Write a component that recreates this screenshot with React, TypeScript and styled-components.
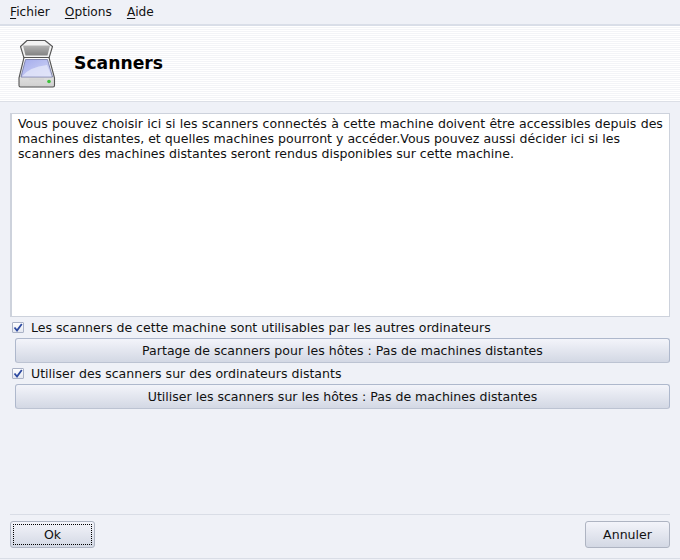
import React from "react";
import styled, { createGlobalStyle } from "styled-components";

const Global = createGlobalStyle`
  html, body { margin: 0; padding: 0; }
  body { font-family: "DejaVu Sans", sans-serif; font-size: 12px; color: #000; background: #eff1f7; }
`;

const Window = styled.div`
  width: 680px;
  height: 560px;
  display: flex;
  flex-direction: column;
  overflow: hidden;
  background: #eff1f7;
`;

const MenuBar = styled.div`
  height: 24px;
  display: flex;
  align-items: center;
  gap: 15px;
  padding-left: 10px;
  border-bottom: 2px solid #d9dee8;
`;

const MenuItem = styled.span`
  font-size: 12.2px;
  color: #111;
  u { text-underline-offset: 2px; }
`;

const Banner = styled.div`
  height: 75px;
  display: flex;
  align-items: center;
  gap: 17px;
  padding-left: 17px;
  border-bottom: 1px solid #dcdfe6;
  background: repeating-linear-gradient(to bottom, #ffffff 0, #ffffff 1px, #f3f4f7 1px, #f3f4f7 2px);
`;

const Title = styled.h1`
  margin: -2px 0 0;
  font-size: 17.2px;
  font-weight: bold;
  color: #000;
`;

const Content = styled.div`
  flex: 1;
  display: flex;
  flex-direction: column;
  padding: 11px 10px 0 10px;
`;

const Description = styled.div`
  height: 204px;
  box-sizing: border-box;
  padding: 2px 4px 2px 6px;
  background: #fff;
  border: 1px solid #cdd2dc;
  border-left-width: 2px;
  font-size: 12.55px;
  line-height: 15px;
  color: #111;
  &::first-line { word-spacing: 0.33px; }
`;

const CheckRow = styled.label`
  height: 21px;
  display: flex;
  align-items: center;
  gap: 7px;
  padding-left: 2px;
  font-size: 12.55px;
  color: #111;
`;

const CheckBox = styled.span`
  width: 10px;
  height: 9px;
  border: 1px solid #aab2c6;
  border-radius: 1px;
  background: linear-gradient(#ffffff, #e4e7f0);
  display: flex;
  align-items: center;
  justify-content: center;
  flex: none;
`;

const WideButton = styled.div`
  margin-left: 5px;
  height: 25px;
  box-sizing: border-box;
  display: flex;
  align-items: center;
  justify-content: center;
  border: 1px solid #aeb8cc;
  border-bottom-color: #bcc3d2;
  border-radius: 3px;
  background: linear-gradient(#f3f4fa, #d3d8e4);
  font-size: 12.55px;
  color: #111;
`;

const Group = styled.div`
  display: flex;
  flex-direction: column;
`;

const Spacer = styled.div`
  flex: 1;
`;

const Footer = styled.div`
  border-top: 1px solid #d9dde6;
  height: 44px;
  box-sizing: border-box;
  padding-top: 6px;
  display: flex;
  justify-content: space-between;
  align-items: flex-start;
`;

const DialogButton = styled.div<{ $focus?: boolean }>`
  width: 85px;
  height: 27px;
  box-sizing: border-box;
  position: relative;
  display: flex;
  align-items: center;
  justify-content: center;
  border: 1px solid #aeb4c2;
  border-radius: 3px;
  background: linear-gradient(#f3f4fa, #d3d8e4);
  font-size: 12.55px;
  color: #111;
  ${(p) =>
    p.$focus &&
    `&::after {
      content: "";
      position: absolute;
      inset: 2px;
      border: 1px dotted #000;
    }`}
`;

const BottomLine = styled.div`
  height: 1px;
  background: #d9dde6;
  margin: 0 -10px 1px;
`;

function ScannerIcon() {
  return (
    <svg width="40" height="50" viewBox="0 0 40 50">
      <defs>
        <linearGradient id="lid" x1="0" y1="0" x2="0" y2="1">
          <stop offset="0" stopColor="#b4b4b4" />
          <stop offset="1" stopColor="#828282" />
        </linearGradient>
        <linearGradient id="body" x1="0" y1="0" x2="0" y2="1">
          <stop offset="0" stopColor="#ffffff" />
          <stop offset="1" stopColor="#cfcfcf" />
        </linearGradient>
        <linearGradient id="glass" x1="0" y1="0" x2="1" y2="1">
          <stop offset="0" stopColor="#a3abec" />
          <stop offset="1" stopColor="#d5d9f6" />
        </linearGradient>
      </defs>
      <path d="M10 1.5 H28 L35.5 7.5 L32 19 H7 L3.5 7.5 Z" fill="#f2f2f2" stroke="#555" strokeWidth="1.1" strokeLinejoin="round" />
      <path d="M6 6.5 H33 L30.5 16.5 H8.5 Z" fill="url(#lid)" />
      <path d="M7 18.5 H32 L37.5 39 V46.5 Q37.5 48 36 48 H3.5 Q2 48 2 46.5 V39 Z" fill="url(#body)" stroke="#555" strokeWidth="1.1" strokeLinejoin="round" />
      <path d="M8.5 20.5 H30.5 L35.5 38 H4 Z" fill="url(#glass)" stroke="#7a7fa8" strokeWidth="0.9" />
      <path d="M5 37.5 Q12 28 30 26 L34.5 37.5 Z" fill="#e6e8f9" opacity="0.75" />
      <rect x="12" y="39.5" width="15" height="2" fill="#d5d5d5" />
      <circle cx="32" cy="42.5" r="1.8" fill="#3cc23c" />
    </svg>
  );
}

function Check() {
  return (
    <svg width="10" height="9" viewBox="0 0 10 9">
      <path d="M1.5 4.5 L4 7.5 L8.8 1" fill="none" stroke="#2c49a0" strokeWidth="1.8" />
    </svg>
  );
}

export default function App() {
  return (
    <Window>
      <Global />
      <MenuBar>
        <MenuItem><u>F</u>ichier</MenuItem>
        <MenuItem><u>O</u>ptions</MenuItem>
        <MenuItem><u>A</u>ide</MenuItem>
      </MenuBar>
      <Banner>
        <ScannerIcon />
        <Title>Scanners</Title>
      </Banner>
      <Content>
        <Description>
          Vous pouvez choisir ici si les scanners connectés à cette machine doivent être accessibles depuis des
          machines distantes, et quelles machines pourront y accéder.Vous pouvez aussi décider ici si les
          scanners des machines distantes seront rendus disponibles sur cette machine.
        </Description>
        <Group>
          <CheckRow><CheckBox><Check /></CheckBox>Les scanners de cette machine sont utilisables par les autres ordinateurs</CheckRow>
          <WideButton>Partage de scanners pour les hôtes : Pas de machines distantes</WideButton>
        </Group>
        <Group>
          <CheckRow><CheckBox><Check /></CheckBox>Utiliser des scanners sur des ordinateurs distants</CheckRow>
          <WideButton>Utiliser les scanners sur les hôtes : Pas de machines distantes</WideButton>
        </Group>
        <Spacer />
        <Footer>
          <DialogButton $focus>Ok</DialogButton>
          <DialogButton>Annuler</DialogButton>
        </Footer>
        <BottomLine />
      </Content>
    </Window>
  );
}
